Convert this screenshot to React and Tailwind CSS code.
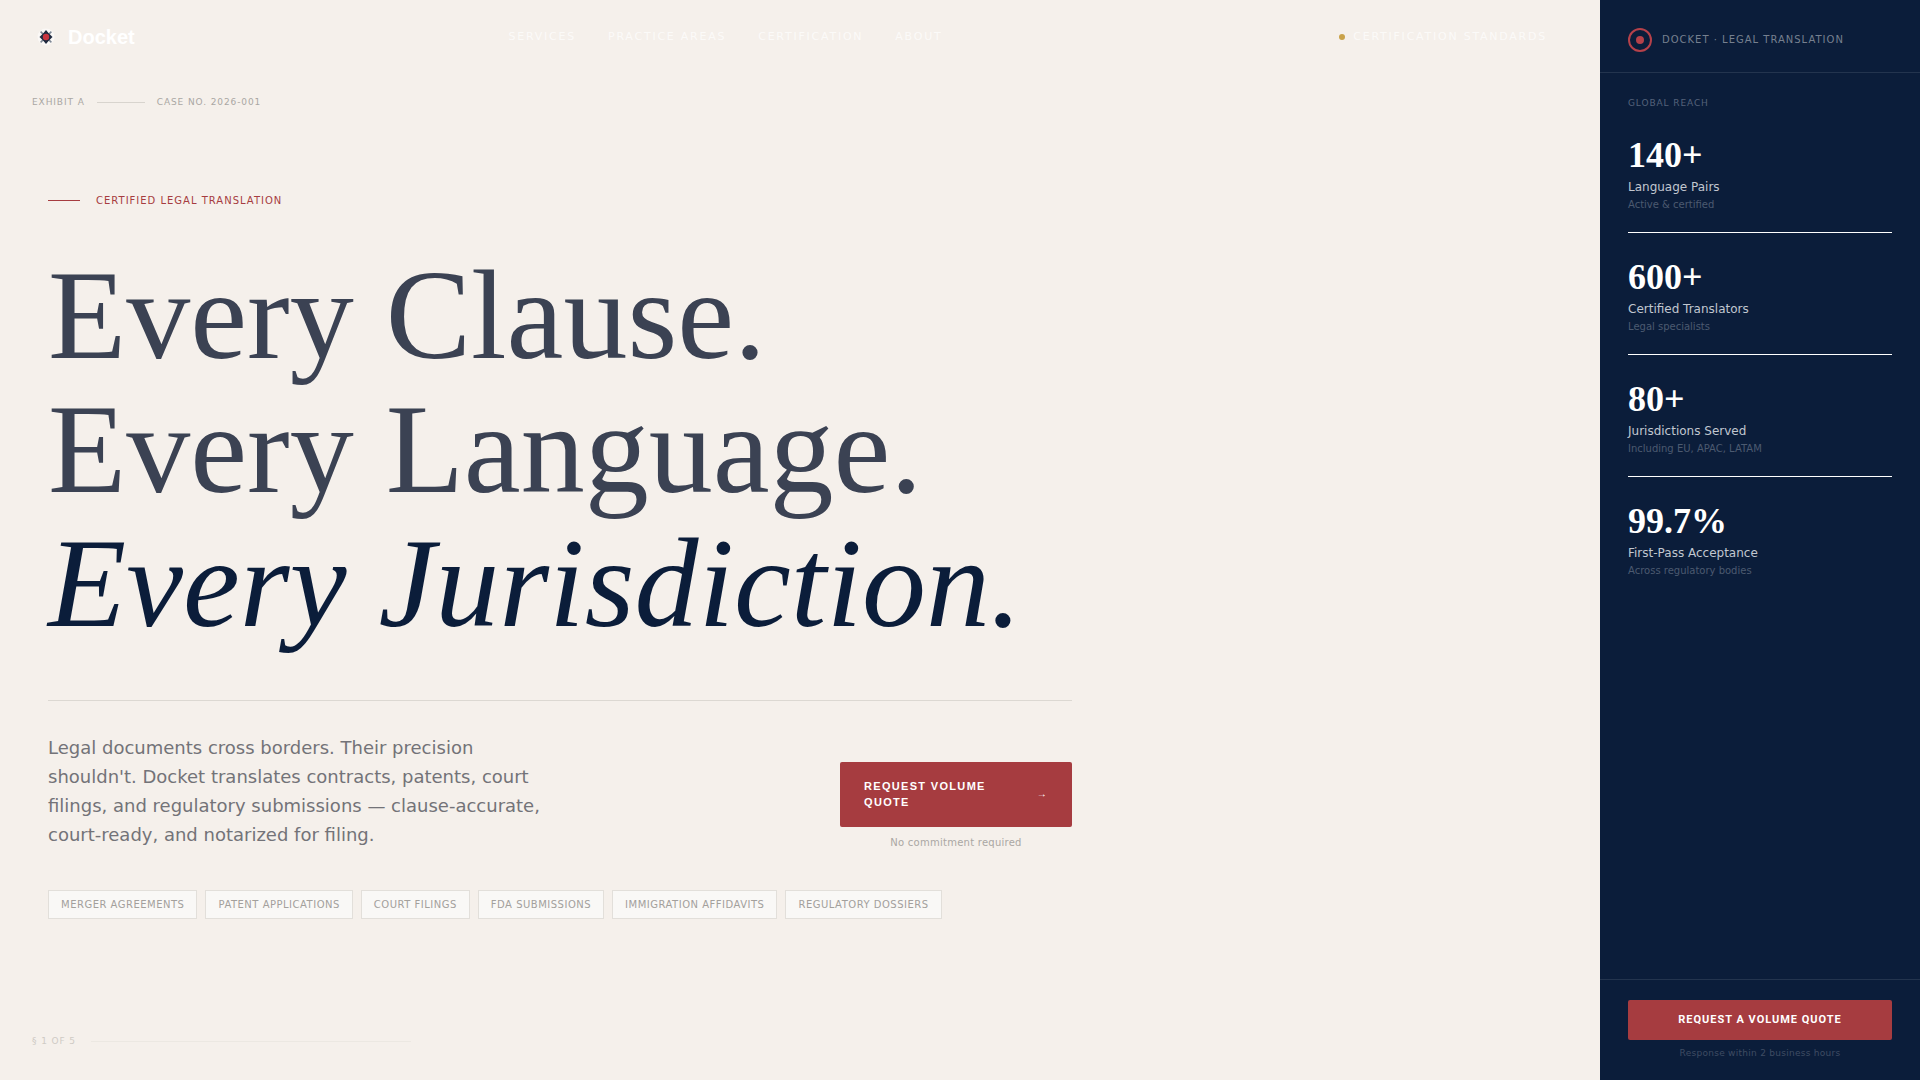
const sans = "font-['DejaVu_Sans',sans-serif]";

const navLinks = ["Services", "Practice Areas", "Certification", "About"];
const tags = [
  "Merger Agreements",
  "Patent Applications",
  "Court Filings",
  "FDA Submissions",
  "Immigration Affidavits",
  "Regulatory Dossiers",
];
const stats = [
  { value: "140+", label: "Language Pairs", note: "Active & certified" },
  { value: "600+", label: "Certified Translators", note: "Legal specialists" },
  { value: "80+", label: "Jurisdictions Served", note: "Including EU, APAC, LATAM" },
  { value: "99.7%", label: "First-Pass Acceptance", note: "Across regulatory bodies" },
];

function Logo() {
  return (
    <svg width="18" height="18" viewBox="0 0 18 18" className="shrink-0">
      <circle cx="9" cy="9" r="8.5" fill="#fff" fillOpacity="0.55" />
      <path d="M3.6 3.6 L14.4 14.4 M14.4 3.6 L3.6 14.4" stroke="#7d8794" strokeWidth="1.5" />
      <path d="M9 2 L11.5 5 L15.5 9 L11.5 13 L9 16 L6.5 13 L2.5 9 L6.5 5 Z" fill="#1f2a3f" />
      <circle cx="9" cy="9" r="3.2" fill="#c8343f" />
    </svg>
  );
}

function TopNav() {
  return (
    <header className="flex h-[74px] shrink-0 items-center justify-between pl-[37px] pr-[53px]">
      <div className="flex items-center gap-[13px]">
        <Logo />
        <span className="font-['Liberation_Sans',sans-serif] text-xl font-bold text-white">Docket</span>
      </div>
      <nav className="ml-[-23px] flex gap-8">
        {navLinks.map((link) => (
          <a key={link} className="text-[11px] uppercase tracking-[0.16em] text-white/70">
            {link}
          </a>
        ))}
      </nav>
      <div className="flex items-center gap-2">
        <span className="size-[6px] rounded-full bg-[#c9a24a]" />
        <span className="text-[11px] uppercase tracking-[0.16em] text-white/70">Certification Standards</span>
      </div>
    </header>
  );
}

function Hero() {
  return (
    <section className="w-[1024px]">
      <div className="flex items-center gap-4">
        <span className="h-px w-8 bg-[#a63c40]" />
        <span className="text-[10px] uppercase tracking-[0.1em] text-[#a63c40]">Certified Legal Translation</span>
      </div>

      <h1 className="mt-10 font-['Liberation_Serif',serif] text-[128px] leading-[1.05] text-[#3b4253]">
        Every Clause.
        <br />
        Every Language.
        <br />
        <em className="text-[#0b1d3a]">Every Jurisdiction.</em>
      </h1>

      <div className="mt-[49px] flex items-start justify-between border-t border-[#dcd8d2] pt-8">
        <p className="w-[500px] text-[18px] leading-[29px] text-[#737378]">
          Legal documents cross borders. Their precision shouldn't. Docket translates contracts, patents, court
          filings, and regulatory submissions — clause-accurate, court-ready, and notarized for filing.
        </p>
        <div className="mt-[29px] flex w-[232px] flex-col items-center">
          <button className="flex h-[65px] w-full items-center justify-between rounded-[2px] bg-[#a63c40] px-6 text-left font-['Liberation_Sans',sans-serif] text-[11px] font-bold uppercase leading-4 tracking-[0.12em] text-white">
            <span className="w-[140px]">Request Volume Quote</span>
            <span className="text-[10px]">→</span>
          </button>
          <span className="mt-2 text-[10px] tracking-[0.025em] text-[#aaa7a3]">No commitment required</span>
        </div>
      </div>

      <div className="mt-10 flex gap-2">
        {tags.map((tag) => (
          <span
            key={tag}
            className="flex h-[29px] items-center border border-[#e2dfda] bg-[#f9f8f6] px-3 text-[10px] uppercase tracking-[0.05em] text-[#a3a09c]"
          >
            {tag}
          </span>
        ))}
      </div>
    </section>
  );
}

function StatsPanel() {
  return (
    <aside className="flex h-screen w-[320px] shrink-0 flex-col bg-[#0b1d3a]">
      <div className="flex h-[73px] items-center gap-[10px] border-b border-white/10 px-7 pt-[7px]">
        <span className="flex size-6 items-center justify-center rounded-full border-2 border-[#b5414a]">
          <span className="size-2 rounded-full bg-[#b5414a]" />
        </span>
        <span className="text-[10px] uppercase tracking-[0.1em] text-[#76808f]">Docket · Legal Translation</span>
      </div>

      <div className="flex-1 px-7 pt-6">
        <p className="text-[9px] uppercase tracking-[0.1em] text-[#55627a]">Global Reach</p>
        <div className="mt-6">
          {stats.map((stat, i) => (
            <div key={stat.value} className={i < 3 ? "mb-[24px] h-[98px] border-b border-white" : "h-[98px]"}>
              <div className="font-['Liberation_Serif',serif] text-[36px] font-bold leading-10 text-white">{stat.value}</div>
              <div className="mt-[2px] text-[12px] leading-5 text-[#c1c7d0]">{stat.label}</div>
              <div className="text-[10px] leading-[15px] text-[#4c5a70]">{stat.note}</div>
            </div>
          ))}
        </div>
      </div>

      <div className="flex h-[101px] flex-col items-center border-t border-white/10 px-7 pt-5">
        <button className="h-10 w-full rounded-[2px] bg-[#a63c40] font-['Roboto',sans-serif] text-[11px] font-bold uppercase tracking-[0.09em] text-white">
          Request a Volume Quote
        </button>
        <span className="mt-[7px] text-[9px] tracking-[0.03em] text-[#3f4c63]">Response within 2 business hours</span>
      </div>
    </aside>
  );
}

export default function App() {
  return (
    <div className={`flex h-screen overflow-hidden bg-[#f5f0eb] ${sans}`}>
      <main className="flex min-w-0 flex-1 flex-col">
        <TopNav />

        <div className="flex items-center gap-3 pl-8 pt-[22px] text-[9px] uppercase tracking-[0.1em] text-[#aaa7a3]">
          <span>Exhibit A</span>
          <span className="h-px w-12 bg-[#d8d4ce]" />
          <span>Case No. 2026-001</span>
        </div>

        <div className="flex-1 pl-12 pt-[83px]">
          <Hero />
        </div>

        <div className="flex items-center gap-[15px] pb-8 pl-8 text-[9px] uppercase tracking-[0.1em] text-[#cfcbc5]">
          <span>§ 1 of 5</span>
          <span className="h-px w-[320px] bg-[#ece8e2]" />
        </div>
      </main>
      <StatsPanel />
    </div>
  );
}
